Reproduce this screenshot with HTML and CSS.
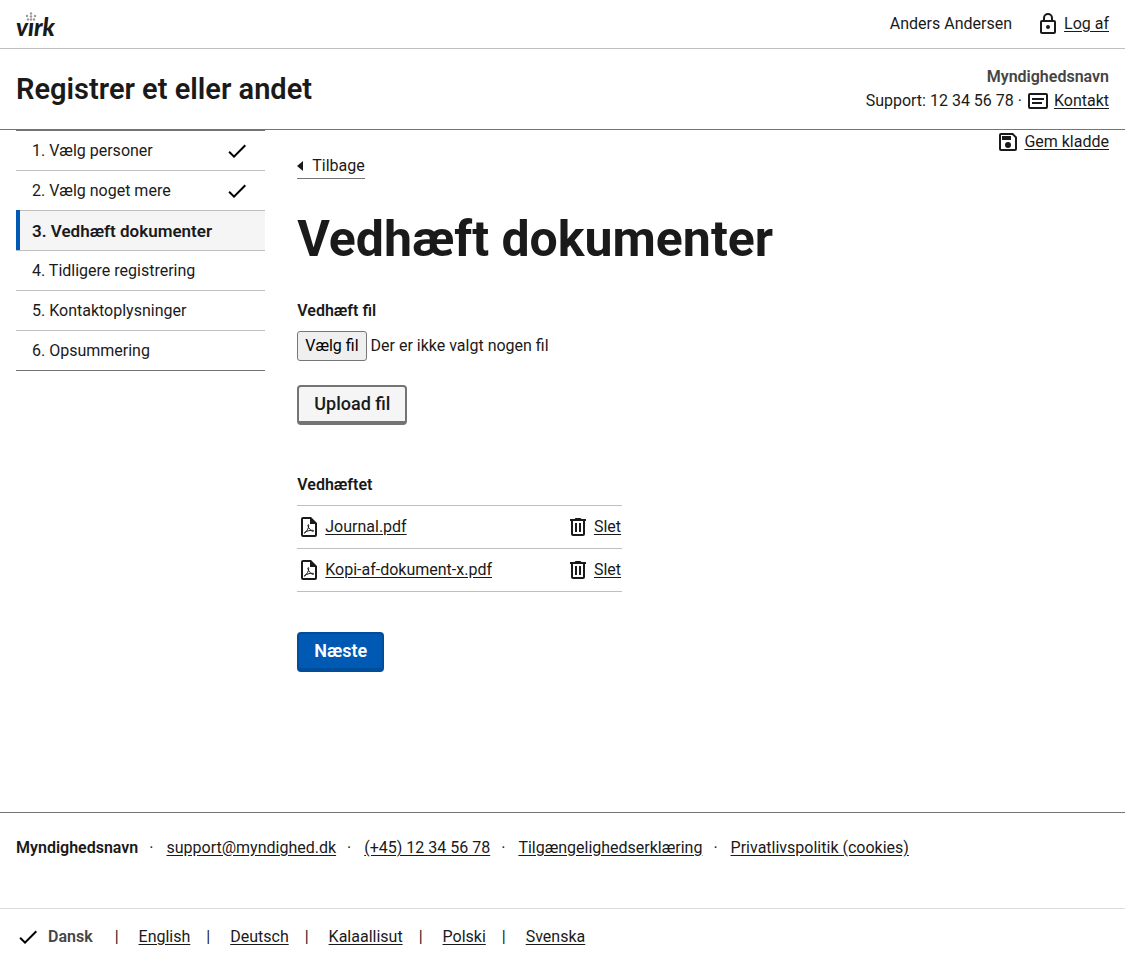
FILE: index.html
```
<!DOCTYPE html>
<html lang="da">
<head>
<meta charset="utf-8">
<meta name="viewport" content="width=device-width, initial-scale=1">
<title>Vedhæft dokumenter – Virk</title>
<link rel="stylesheet" href="styles.css">
</head>
<body>
<svg width="0" height="0" class="sprite" aria-hidden="true">
  <symbol id="check" viewBox="0 0 24 24"><path d="M9 16.17 4.83 12l-1.42 1.41L9 19 21 7l-1.41-1.41z"/></symbol>
  <symbol id="lock" viewBox="0 0 24 24"><path d="M18 8h-1V6A5 5 0 0 0 7 6v2H6a2 2 0 0 0-2 2v10c0 1.100.9 2 2 2h12a2 2 0 0 0 2-2V10a2 2 0 0 0-2-2zM9 6a3 3 0 0 1 6 0v2H9zm9 14H6V10h12zm-6-3a2 2 0 1 0 0-4 2 2 0 0 0 0 4z"/></symbol>
  <symbol id="message" viewBox="0 0 24 24"><path d="M20 4H4a2 2 0 0 0-2 2v12a2 2 0 0 0 2 2h16a2 2 0 0 0 2-2V6a2 2 0 0 0-2-2zm0 14H4V6h16zM6 9h12v2H6zm0 4h10v2H6z"/></symbol>
  <symbol id="save" viewBox="0 0 24 24"><path d="M17 3H5a2 2 0 0 0-2 2v14a2 2 0 0 0 2 2h14a2 2 0 0 0 2-2V7zm2 16H5V5h11.200L19 7.800zM12 12a3 3 0 1 0 0 6 3 3 0 0 0 0-6zM6 6h9v4H6z"/></symbol>
  <symbol id="trash" viewBox="0 0 24 24"><path d="M15.500 4l-1-1h-5l-1 1H4v2h1v13a2 2 0 0 0 2 2h10a2 2 0 0 0 2-2V6h1V4zM17 19H7V6h10zM9 8h2v9H9zm4 0h2v9h-2z"/></symbol>
  <symbol id="pdf" viewBox="0 0 24 24"><path d="M14 2H6a2 2 0 0 0-2 2v16a2 2 0 0 0 2 2h12a2 2 0 0 0 2-2V8zM6 20V4h7v5h5v11z"/><path class="pdf-loop" d="M7.500 18c2-1.200 4.500-5 4.200-7.800-.1-1-1-.7-.8.3.4 2.500 2.600 5.200 5 5.900 1 .2 1-1 0-1.100-2.600-.2-5.600.6-8 2-.9.700-.9 1-.4.700z"/></symbol>
</svg>

<header>
  <div class="topbar">
    <a class="logo" href="#" aria-label="virk">
      <svg width="48" height="32" viewBox="0 0 48 32" aria-hidden="true">
        <g class="crown">
          <circle cx="15" cy="5.500" r="1.200"/><circle cx="15" cy="8.500" r="1.200"/><circle cx="15" cy="11.500" r="1.200"/>
          <circle cx="11" cy="8" r="1.200"/><circle cx="12" cy="11.500" r="1.200"/>
          <circle cx="19" cy="8" r="1.200"/><circle cx="18" cy="11.500" r="1.200"/>
        </g>
        <text class="logo-text" x="0" y="28">vırk</text>
      </svg>
    </a>
    <div class="user">
      <span>Anders Andersen</span>
      <a class="icon-link" href="#"><svg class="icon"><use href="#lock"/></svg><span>Log af</span></a>
    </div>
  </div>
  <div class="solution">
    <div class="solution-title">Registrer et eller andet</div>
    <div class="authority">
      <strong class="muted">Myndighedsnavn</strong>
      <div class="support"><span>Support: 12 34 56 78 ·</span><a class="icon-link" href="#"><svg class="icon"><use href="#message"/></svg><span>Kontakt</span></a></div>
    </div>
  </div>
</header>

<div class="page">
  <nav class="steps" aria-label="Trin">
    <ol>
      <li><a href="#">1. Vælg personer<svg class="icon check"><use href="#check"/></svg></a></li>
      <li><a href="#">2. Vælg noget mere<svg class="icon check"><use href="#check"/></svg></a></li>
      <li class="current"><a href="#" aria-current="step">3. Vedhæft dokumenter</a></li>
      <li><a href="#">4. Tidligere registrering</a></li>
      <li><a href="#">5. Kontaktoplysninger</a></li>
      <li><a href="#">6. Opsummering</a></li>
    </ol>
  </nav>
  <main>
    <div class="draft"><a class="icon-link" href="#"><svg class="icon"><use href="#save"/></svg><span>Gem kladde</span></a></div>
    <a class="back" href="#"><svg width="7" height="10" viewBox="0 0 7 10" aria-hidden="true"><path d="M6 0v10L0 5z"/></svg>Tilbage</a>
    <h1>Vedhæft dokumenter</h1>
    <form>
      <label class="field-label" for="file">Vedhæft fil</label>
      <div class="file">
        <span class="file-button">Vælg fil</span>
        <span>Der er ikke valgt nogen fil</span>
        <input id="file" type="file">
      </div>
      <button class="button secondary" type="button">Upload fil</button>
      <h2>Vedhæftet</h2>
      <table>
        <tbody>
          <tr>
            <td><a class="icon-link" href="#"><svg class="icon"><use href="#pdf"/></svg><span>Journal.pdf</span></a></td>
            <td class="action"><a class="icon-link" href="#"><svg class="icon"><use href="#trash"/></svg><span>Slet</span></a></td>
          </tr>
          <tr>
            <td><a class="icon-link" href="#"><svg class="icon"><use href="#pdf"/></svg><span>Kopi-af-dokument-x.pdf</span></a></td>
            <td class="action"><a class="icon-link" href="#"><svg class="icon"><use href="#trash"/></svg><span>Slet</span></a></td>
          </tr>
        </tbody>
      </table>
      <button class="button primary" type="button">Næste</button>
    </form>
  </main>
</div>

<footer>
  <ul class="contact">
    <li><strong>Myndighedsnavn</strong></li>
    <li><a href="#">support@myndighed.dk</a></li>
    <li><a href="#">(+45) 12 34 56 78</a></li>
    <li><a href="#">Tilgængelighedserklæring</a></li>
    <li><a href="#">Privatlivspolitik (cookies)</a></li>
  </ul>
  <ul class="languages">
    <li class="chosen"><svg class="icon check"><use href="#check"/></svg><strong class="muted">Dansk</strong></li>
    <li><a href="#" lang="en">English</a></li>
    <li><a href="#" lang="de">Deutsch</a></li>
    <li><a href="#" lang="kl">Kalaallisut</a></li>
    <li><a href="#" lang="pl">Polski</a></li>
    <li><a href="#" lang="sv">Svenska</a></li>
  </ul>
</footer>
</body>
</html>
```
FILE: styles.css
```
* { box-sizing: border-box; }

body {
  margin: 0;
  color: #1a1a1a;
  background: #fff;
  font: 400 16px/24px Roboto, "Liberation Sans", sans-serif;
}

a { color: inherit; text-underline-offset: 2px; }
strong { font-weight: 600; }
ol, ul { margin: 0; padding: 0; list-style: none; }

.sprite { position: absolute; }
.muted { color: #454545; }

.icon { flex: none; width: 24px; height: 24px; fill: #1a1a1a; }
.check { fill: #000; }
.pdf-loop { fill: none; stroke: #1a1a1a; stroke-width: 1; }

.icon-link { display: inline-flex; align-items: center; gap: 4px; text-decoration: none; }
.icon-link span { text-decoration: underline; }

.topbar {
  display: flex;
  align-items: center;
  justify-content: space-between;
  height: 49px;
  padding: 0 16px;
  border-bottom: 1px solid #bfbfbf;
}
.logo { display: flex; }
.logo svg { overflow: visible; }
.logo-text { font: italic 900 24px/24px Lato, sans-serif; fill: #1a1a1a; }
.crown { fill: #999; }
.user { display: flex; align-items: center; gap: 24px; }

.solution {
  display: flex;
  align-items: center;
  justify-content: space-between;
  padding: 16px;
  border-bottom: 1px solid #747474;
}
.solution-title { font-size: 29px; font-weight: 600; line-height: 40px; }
.authority { text-align: right; }
.authority > strong { display: block; }
.support { display: flex; align-items: center; gap: 4px; }

.page {
  display: grid;
  grid-template-columns: repeat(12, minmax(0, 1fr));
  gap: 32px;
  padding: 0 16px 140px;
}
.steps { grid-column: span 3; }
main { grid-column: span 9; }

.steps li { position: relative; border-top: 1px solid #bfbfbf; }
.steps li:first-child { border-top-color: #747474; }
.steps li:last-child { border-bottom: 1px solid #747474; }
.steps a {
  display: flex;
  align-items: center;
  justify-content: space-between;
  height: 39px;
  padding: 0 16px;
  text-decoration: none;
}
.steps .current { background: #f5f5f5; font-size: 17px; font-weight: 600; }
.current::before {
  content: "";
  position: absolute;
  top: -1px;
  bottom: 0;
  left: 0;
  width: 4px;
  background: #0059b3;
}

.draft { display: flex; justify-content: flex-end; }
.back {
  display: inline-flex;
  align-items: center;
  gap: 8px;
  height: 25px;
  border-bottom: 1px solid #747474;
  text-decoration: none;
}
.back svg { fill: #1a1a1a; }

h1 { margin: 32px 0; font-size: 50px; font-weight: 700; line-height: 56px; }
h2 { margin: 48px 0 8px; font-size: 16px; font-weight: 600; line-height: 24px; }

.field-label { display: block; font-weight: 600; }
.file {
  position: relative;
  display: flex;
  align-items: center;
  gap: 4px;
  width: fit-content;
  margin: 8px 0 24px;
}
.file-button {
  padding: 2px 7px;
  border: 1px solid #767676;
  border-radius: 3px;
  background: #efefef;
  color: #000;
}
.file input { position: absolute; inset: 0; width: 100%; opacity: 0; }

.button {
  display: block;
  height: 40px;
  padding: 0 15px;
  border: 2px solid #747474;
  border-bottom-width: 4px;
  border-radius: 4px;
  background: #f5f5f5;
  color: #1a1a1a;
  font: 500 18px/24px Roboto, "Liberation Sans", sans-serif;
}
.primary { margin-top: 40px; border-color: #004d99; background: #0059b3; color: #fff; font-weight: 600; }

table { width: 40%; border-collapse: collapse; border-top: 1px solid #bfbfbf; }
td { height: 43px; padding: 0; border-bottom: 1px solid #bfbfbf; }
td .icon-link { display: flex; }
.action { width: 56px; }

footer { border-top: 1px solid #747474; }
.contact { display: flex; flex-wrap: wrap; padding: 23px 16px 48px; }
.contact li + li::before { content: "·"; margin: 0 13px 0 11px; }
.languages { display: flex; flex-wrap: wrap; padding: 16px 16px 12px; border-top: 1px solid #dcdcdc; }
.languages li + li::before { content: "|"; margin: 0 20px 0 16px; }
.chosen { display: flex; align-items: center; gap: 8px; padding-right: 6px; }
```
